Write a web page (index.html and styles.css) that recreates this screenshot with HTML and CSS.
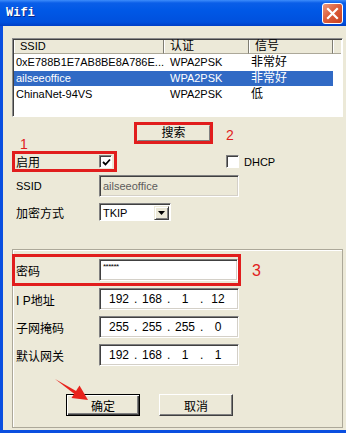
FILE: index.html
```html
<!DOCTYPE html>
<html lang="zh-CN">
<head>
  <meta charset="UTF-8" />
  <meta name="viewport" content="width=device-width, initial-scale=1.0"/>
  <title>Wifi</title>
  <link rel="stylesheet" href="styles.css">
</head>
<body>
  <div class="window">
    <div class="titlebar">
      <span class="title">Wifi</span>
      <span class="close">
        <svg width="13" height="13" viewBox="0 0 13 13"><path d="M2 2 L11 11 M11 2 L2 11" stroke="#fff" stroke-width="2.2" stroke-linecap="square"/></svg>
      </span>
    </div>

    <div class="client">
      <div class="listview">
        <div class="lv-head">
          <span class="hc c1">SSID</span>
          <span class="hc c2 cjk">认证</span>
          <span class="hc c3 cjk">信号</span>
          <span class="hc c4"></span>
        </div>
        <div class="lv-row">
          <span class="c1">0xE788B1E7AB8BE8A786E...</span>
          <span class="c2">WPA2PSK</span>
          <span class="c3 cjk">非常好</span>
        </div>
        <div class="lv-row selected">
          <span class="c1">ailseeoffice</span>
          <span class="c2">WPA2PSK</span>
          <span class="c3 cjk">非常好</span>
        </div>
        <div class="lv-row">
          <span class="c1">ChinaNet-94VS</span>
          <span class="c2">WPA2PSK</span>
          <span class="c3 cjk">低</span>
        </div>
      </div>

      <div class="search-row">
        <div class="redbox search-box">
          <button class="btn search-btn cjk">搜索</button>
        </div>
      </div>

      <div class="enable-row">
        <div class="redbox enable-box">
          <span class="label cjk">启用</span>
          <span class="checkbox">
            <svg width="9" height="9" viewBox="0 0 9 9"><path d="M1 4 L3.5 6.5 L8 1.5" fill="none" stroke="#000" stroke-width="1.8"/></svg>
          </span>
        </div>
        <span class="checkbox dhcp-check"></span>
        <span class="dhcp-label">DHCP</span>
      </div>

      <div class="field-row ssid-row">
        <span class="label">SSID</span>
        <div class="field disabled">ailseeoffice</div>
      </div>

      <div class="field-row combo-row">
        <span class="label cjk">加密方式</span>
        <div class="combo">
          <span class="combo-text">TKIP</span>
          <span class="combo-btn">
            <svg width="7" height="4" viewBox="0 0 7 4"><path d="M0 0 H7 L3.5 4 Z" fill="#000"/></svg>
          </span>
        </div>
      </div>

      <div class="group">
        <div class="redbox pwd-box">
          <span class="label cjk">密码</span>
          <div class="field pwd">******</div>
        </div>

        <div class="field-row ip-row first">
          <span class="label cjk">I P地址</span>
          <div class="field ip">
            <span class="oct">192</span><span class="dot">.</span><span class="oct">168</span><span class="dot">.</span><span class="oct">1</span><span class="dot">.</span><span class="oct">12</span>
          </div>
        </div>
        <div class="field-row ip-row">
          <span class="label cjk">子网掩码</span>
          <div class="field ip">
            <span class="oct">255</span><span class="dot">.</span><span class="oct">255</span><span class="dot">.</span><span class="oct">255</span><span class="dot">.</span><span class="oct">0</span>
          </div>
        </div>
        <div class="field-row ip-row">
          <span class="label cjk">默认网关</span>
          <div class="field ip">
            <span class="oct">192</span><span class="dot">.</span><span class="oct">168</span><span class="dot">.</span><span class="oct">1</span><span class="dot">.</span><span class="oct">1</span>
          </div>
        </div>

        <div class="button-row">
          <button class="btn default cjk">确定</button>
          <button class="btn cjk">取消</button>
        </div>
      </div>
    </div>

    <!-- red annotations over the dialog -->
    <span class="mark mark-1">1</span>
    <span class="mark mark-2">2</span>
    <span class="mark mark-3">3</span>
    <svg class="arrow" width="46" height="34" viewBox="50 372 46 34">
      <polygon points="55,379 76.5,391.2 74.8,394.2" fill="#e8231c"/>
      <polygon points="71.5,398 88,400 79.5,385.5" fill="#e8231c"/>
    </svg>
  </div>
</body>
</html>
```

FILE: styles.css
```css
* {
  box-sizing: border-box;
}
body {
  margin: 0;
  background-color: #ece9d8;
  font-family: "Liberation Sans", "Noto Sans CJK SC", sans-serif;
  font-size: 11px;
  color: #000;
}
.cjk {
  font-size: 12px;
}
.window {
  position: relative;
  width: 346px;
  height: 433px;
  overflow: hidden;
  background-color: #ece9d8;
}

/* title bar */
.titlebar {
  height: 26px;
  display: flex;
  align-items: center;
  justify-content: space-between;
  padding: 0 3px 0 6px;
  background: linear-gradient(#3d8cfb 0, #0a5ee8 3px, #0058e6 40%, #0050dd 85%, #003fc6 100%);
}
.title {
  color: #fff;
  font-family: "Liberation Mono", monospace;
  font-weight: bold;
  font-size: 12px;
  text-shadow: 1px 1px #0a2a8c;
}
.close {
  width: 21px;
  height: 21px;
  border: 1px solid #fff;
  border-radius: 3px;
  display: flex;
  align-items: center;
  justify-content: center;
  background: linear-gradient(135deg, #ec9a7e 0, #dd5f3c 45%, #c8401f 100%);
}

/* client area */
.client {
  height: 407px;
  border-left: 3px solid #0a4fe0;
  border-bottom: 3px solid #0a4fe0;
  padding: 12px 0 0 9px;
}

/* list view */
.listview {
  width: 331px;
  height: 79px;
  background-color: #fff;
  border: 1px solid;
  border-color: #8c8c8c #fff #fff #8c8c8c;
  box-shadow: inset 1px 1px #404040;
  padding: 1px 0 0 1px;
}
.lv-head {
  display: flex;
  height: 14px;
}
.hc {
  height: 14px;
  line-height: 13px;
  padding-left: 6px;
  background-color: #ece9d8;
  border-right: 1px solid #7f7d72;
  border-bottom: 1px solid #aca899;
  box-shadow: inset 1px 0 #fff;
}
.c1 { width: 150px; }
.c2 { width: 85px; }
.c3 { width: 84px; }
.c4 { width: 8px; border-right: none; }
.lv-row {
  display: flex;
  width: 319px;
  height: 15px;
  line-height: 15px;
  margin-top: 1px;
}
.lv-row .c1 { padding-left: 2px; }
.lv-row .c2 { padding-left: 6px; }
.lv-row .c3 { padding-left: 2px; }
.lv-row.selected {
  background-color: #316ac5;
  color: #fff;
}

/* red marking boxes */
.redbox {
  border: 3px solid #e11d1d;
}

/* search */
.search-row {
  margin-top: 5px;
  padding-left: 122px;
}
.search-box {
  width: 79px;
  height: 22px;
}
.btn {
  font-family: "Liberation Sans", "Noto Sans CJK SC", sans-serif;
  background-color: #ece9d8;
  color: #000;
  padding: 0;
  border: 1px solid;
  border-color: #fff #404040 #404040 #fff;
  box-shadow: inset -1px -1px #808080;
}
.search-btn {
  width: 100%;
  height: 100%;
  line-height: 14px;
  border-color: #ece9d8 #808080 #808080 #ece9d8;
  box-shadow: none;
}

/* enable row */
.enable-row {
  display: flex;
  align-items: center;
  margin-top: 7px;
}
.enable-box {
  display: flex;
  align-items: center;
  width: 105px;
  height: 21px;
}
.enable-box .label {
  width: 84px;
  padding-left: 1px;
}
.checkbox {
  width: 13px;
  height: 13px;
  background-color: #fff;
  border: 1px solid;
  border-color: #808080 #fff #fff #808080;
  box-shadow: inset 1px 1px #404040;
  display: flex;
  align-items: center;
  justify-content: center;
  padding: 1px 0 0 1px;
}
.dhcp-check {
  margin-left: 109px;
}
.dhcp-label {
  margin-left: 5px;
}

/* form rows */
.field-row {
  display: flex;
  align-items: center;
}
.field-row .label {
  width: 87px;
  padding-left: 4px;
}
.field {
  width: 140px;
  height: 22px;
  background-color: #fff;
  border: 1px solid;
  border-color: #808080 #fff #fff #808080;
  box-shadow: inset 1px 1px #404040, inset -1px -1px #d4d0c8;
  padding-left: 3px;
  display: flex;
  align-items: center;
}
.field.disabled {
  background-color: #ece9d8;
  color: #5c5c5c;
}
.ssid-row {
  margin-top: 3px;
}
.combo-row {
  margin-top: 6px;
}
.combo {
  width: 72px;
  height: 18px;
  display: flex;
  align-items: center;
  justify-content: space-between;
  background-color: #fff;
  border: 1px solid;
  border-color: #808080 #fff #fff #808080;
  box-shadow: inset 1px 1px #404040;
  padding: 2px 1px 1px 3px;
}
.combo-btn {
  width: 15px;
  height: 14px;
  display: flex;
  align-items: center;
  justify-content: center;
  background-color: #ece9d8;
  border: 1px solid;
  border-color: #ece9d8 #404040 #404040 #ece9d8;
  box-shadow: inset 1px 1px #fff, inset -1px -1px #808080;
}

/* lower group */
.group {
  margin-top: 28px;
  width: 331px;
  height: 179px;
  border: 1px solid #aca899;
  box-shadow: inset 1px 1px #fff;
  padding-top: 4px;
}
.pwd-box {
  display: flex;
  align-items: center;
  width: 229px;
  height: 32px;
  margin-left: -1px;
}
.pwd-box .label {
  width: 84px;
  padding-left: 1px;
}
.field.pwd {
  width: 139px;
  align-items: flex-start;
  padding-top: 2px;
  font-size: 8px;
  letter-spacing: -0.5px;
}
.group .field-row .label {
  width: 86px;
  padding-left: 3px;
}
.ip-row {
  margin-top: 6px;
}
.ip-row.first {
  margin-top: 2px;
}
.field.ip {
  padding-left: 4px;
  font-size: 12px;
}
.oct {
  width: 30px;
  text-align: center;
}
.dot {
  width: 3px;
  text-align: center;
}

/* bottom buttons */
.button-row {
  display: flex;
  gap: 19px;
  margin-top: 28px;
  padding-left: 53px;
}
.button-row .btn {
  width: 74px;
  height: 22px;
}
.btn.default {
  border: 1px solid #000;
  box-shadow: inset 1px 1px #fff, inset -1px -1px #404040, inset -2px -2px #808080;
}

/* annotations */
.mark {
  position: absolute;
  color: #e11d1d;
  font-size: 14px;
  line-height: 1;
}
.mark-1 { left: 20px; top: 137px; }
.mark-2 { left: 226px; top: 128px; }
.mark-3 { left: 252px; top: 263px; font-size: 16px; }
.arrow {
  position: absolute;
  left: 50px;
  top: 372px;
}
```
